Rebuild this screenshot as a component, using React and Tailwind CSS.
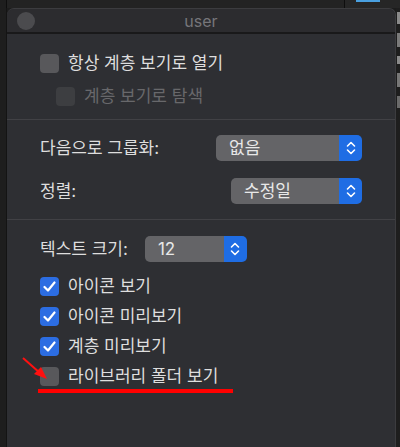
import React from "react";

const Check = () => (
  <svg width="13" height="11" viewBox="0 0 13 11" fill="none">
    <path d="M1.5 6 L5 9.5 L11.5 1.5" stroke="white" strokeWidth="2.2" strokeLinecap="round" strokeLinejoin="round" />
  </svg>
);

const Checkbox = ({ checked, disabled, label }) => (
  <div className="flex items-center h-[19px] gap-[9px]">
    <div
      className={`w-[19px] h-[19px] rounded-[4px] flex items-center justify-center ${
        checked ? "bg-[#2c6de2]" : disabled ? "bg-[#3d3e41]" : "bg-[#58585b]"
      }`}
    >
      {checked && <Check />}
    </div>
    <span
      className={`text-[17px] leading-none ${
        disabled ? "text-[#68686b]" : "text-[#dedede]"
      }`}
    >
      {label}
    </span>
  </div>
);

const Chevrons = () => (
  <svg width="10" height="16" viewBox="0 0 10 16" fill="none">
    <path d="M1.5 6 L5 2.5 L8.5 6" stroke="white" strokeWidth="1.6" strokeLinecap="round" strokeLinejoin="round" />
    <path d="M1.5 10 L5 13.5 L8.5 10" stroke="white" strokeWidth="1.6" strokeLinecap="round" strokeLinejoin="round" />
  </svg>
);

const Popup = ({ value, width }) => (
  <div className={`flex h-[26px] rounded-[5px] overflow-hidden ${width}`}>
    <div className="flex-1 bg-[#646467] flex items-center pl-[13px] text-[17px] text-[#e8e8e8] leading-none">
      {value}
    </div>
    <div className="w-[23px] bg-[#1f6de4] flex items-center justify-center">
      <Chevrons />
    </div>
  </div>
);

const Separator = () => <div className="h-px bg-[#414145] -ml-[33px]" />;

export default function App() {
  return (
    <div className="w-[400px] h-[447px] bg-[#1c1c1c] flex flex-col overflow-hidden relative font-['Inter','Noto_Sans_CJK_KR',sans-serif]">
      {/* top strip behind the popover */}
      <div className="h-[8px] flex shrink-0">
        <div className="w-[7px] border-r border-[#0e0e0e] bg-[#1e1e1e]" />
        <div className="w-[338px] bg-[#232323] border-r border-[#0e0e0e]" />
        <div className="flex-1 bg-[#262626] pl-[11px]">
          <div className="w-[24px] h-[2px] bg-[#4aa0e0]" />
        </div>
      </div>

      <div className="flex flex-1">
        <div className="w-[7px] bg-[#1e1e1e] border-r border-[#141414]" />

        {/* popover panel */}
        <div className="w-[389px] flex flex-col bg-[#2e2f33] rounded-t-[7px] border-t border-r border-[#3c3c3f] overflow-hidden">
          <div className="h-[25px] bg-[#2c2c2f] flex items-center relative border-b-2 border-[#19191a]">
            <div className="w-[18px] h-[18px] rounded-full bg-[#4b4b4e] ml-[10px]" />
            <span className="absolute left-0 right-0 text-center text-[16px] text-[#76767a] leading-none">
              user
            </span>
          </div>

          <div className="flex flex-col pl-[33px] pr-[33px] pt-[20px]">
            <Checkbox label="항상 계층 보기로 열기" />
            <div className="pl-[16px] mt-[14px]">
              <Checkbox label="계층 보기로 탐색" disabled />
            </div>

            <div className="mt-[13px] -mr-[33px]">
              <Separator />
            </div>

            <div className="mt-[15px] flex items-center justify-between">
              <span className="text-[17px] text-[#dedede] leading-none">다음으로 그룹화:</span>
              <Popup value="없음" width="w-[146px]" />
            </div>
            <div className="mt-[17px] flex items-center justify-between">
              <span className="text-[17px] text-[#dedede] leading-none">정렬:</span>
              <Popup value="수정일" width="w-[131px]" />
            </div>

            <div className="mt-[15px] -mr-[33px]">
              <Separator />
            </div>

            <div className="mt-[16px] flex items-center gap-[17px]">
              <span className="text-[17px] text-[#dedede] leading-none">텍스트 크기:</span>
              <Popup value="12" width="w-[102px]" />
            </div>

            <div className="mt-[15px] flex flex-col gap-[11px]">
              <Checkbox label="아이콘 보기" checked />
              <Checkbox label="아이콘 미리보기" checked />
              <Checkbox label="계층 미리보기" checked />
              <Checkbox label="라이브러리 폴더 보기" />
            </div>
            <div className="mt-[3px] -ml-[2px] w-[195px] h-[4px] bg-[#ff0000]" />
          </div>
        </div>

        <div className="flex-1 bg-[#1e1e1e] flex flex-col gap-[9px] pt-[4px] pl-[1px]">
          <div className="w-[3px] h-[12px] bg-[#8a8a8a]" />
          <div className="w-[3px] h-[14px] bg-[#7a7a7a]" />
          <div className="w-[3px] h-[8px] bg-[#8a8a8a]" />
          <div className="w-[3px] h-[14px] bg-[#777777]" />
          <div className="w-[3px] h-[12px] bg-[#6a6a6a]" />
        </div>
      </div>

      {/* red annotation arrow */}
      <svg className="absolute left-[20px] top-[354px]" width="32" height="30" viewBox="0 0 32 30">
        <line x1="3" y1="4" x2="20" y2="19" stroke="#ff1010" strokeWidth="2" />
        <polygon points="27,25 14,20 21,13" fill="#ff1010" />
      </svg>
    </div>
  );
}
